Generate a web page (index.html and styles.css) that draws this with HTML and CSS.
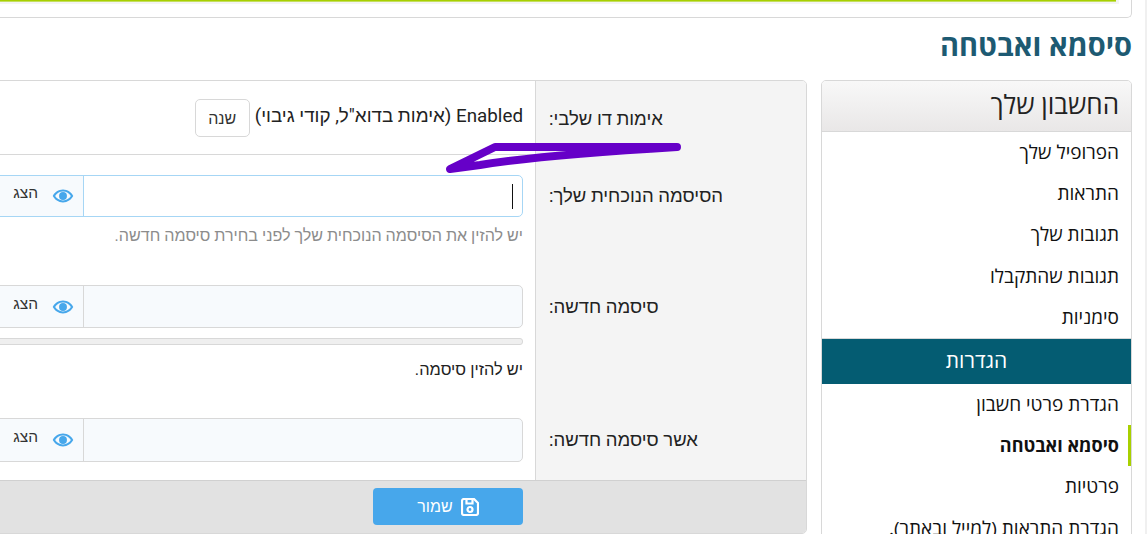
FILE: index.html
```html
<!DOCTYPE html>
<html lang="he" dir="rtl">
	<head>
		<meta charset="utf-8">
		<title>סיסמא ואבטחה</title>
		<link rel="stylesheet" href="styles.css">
	</head>
	<body>
		<div class="page">
			<div class="topcard"><div class="topline"></div></div>
			<h1 class="title">סיסמא ואבטחה</h1>

			<div class="columns">
				<div class="side">
					<div class="side-head">החשבון שלך</div>
					<a class="side-item">הפרופיל שלך</a>
					<a class="side-item">התראות</a>
					<a class="side-item">תגובות שלך</a>
					<a class="side-item">תגובות שהתקבלו</a>
					<a class="side-item">סימניות</a>
					<div class="side-section">הגדרות</div>
					<a class="side-item">הגדרת פרטי חשבון</a>
					<a class="side-item active">סיסמא ואבטחה</a>
					<a class="side-item">פרטיות</a>
					<a class="side-item">הגדרת התראות (למייל ובאתר).</a>
				</div>

				<form class="main">
					<div class="rows">
						<div class="row row-two">
							<div class="label">אימות דו שלבי:</div>
							<div class="field two-step">
								<span>Enabled (אימות בדוא"ל, קודי גיבוי)</span>
								<button type="button" class="btn-small">שנה</button>
							</div>
						</div>

						<div class="row row-current">
							<div class="label">הסיסמה הנוכחית שלך:</div>
							<div class="field">
								<div class="input-group focus">
									<div class="input"><span class="caret"></span></div>
									<div class="addon">
										<svg class="eye" viewBox="0 0 24 16"><path d="M12 1C7 1 3 4 .8 8 3 12 7 15 12 15s9-3 11.200-7C21 4 17 1 12 1zm0 2.200c4 0 6.800 2.300 8.600 4.800-1.800 2.500-4.600 4.800-8.600 4.800S5.200 10.500 3.400 8C5.200 5.500 8 3.200 12 3.200z"/><circle cx="12" cy="8" r="4.300"/></svg>
										<span>הצג</span>
									</div>
								</div>
								<div class="hint">יש להזין את הסיסמה הנוכחית שלך לפני בחירת סיסמה חדשה.</div>
							</div>
						</div>

						<div class="row row-new">
							<div class="label">סיסמה חדשה:</div>
							<div class="field">
								<div class="input-group">
									<div class="input"></div>
									<div class="addon">
										<svg class="eye" viewBox="0 0 24 16"><path d="M12 1C7 1 3 4 .8 8 3 12 7 15 12 15s9-3 11.200-7C21 4 17 1 12 1zm0 2.200c4 0 6.800 2.300 8.600 4.800-1.800 2.500-4.600 4.800-8.600 4.800S5.200 10.500 3.400 8C5.200 5.500 8 3.200 12 3.200z"/><circle cx="12" cy="8" r="4.300"/></svg>
										<span>הצג</span>
									</div>
								</div>
								<div class="meter"></div>
								<div class="hint hint-dark">יש להזין סיסמה.</div>
							</div>
						</div>

						<div class="row row-confirm">
							<div class="label">אשר סיסמה חדשה:</div>
							<div class="field">
								<div class="input-group">
									<div class="input"></div>
									<div class="addon">
										<svg class="eye" viewBox="0 0 24 16"><path d="M12 1C7 1 3 4 .8 8 3 12 7 15 12 15s9-3 11.200-7C21 4 17 1 12 1zm0 2.200c4 0 6.800 2.300 8.600 4.800-1.800 2.500-4.600 4.800-8.600 4.800S5.200 10.500 3.400 8C5.200 5.500 8 3.200 12 3.200z"/><circle cx="12" cy="8" r="4.300"/></svg>
										<span>הצג</span>
									</div>
								</div>
							</div>
						</div>
					</div>

					<div class="footer">
						<button type="button" class="btn-save">
							<svg class="save-icon" viewBox="0 0 18 18"><path d="M3 1h10l4 4v10a2 2 0 0 1-2 2H3a2 2 0 0 1-2-2V3a2 2 0 0 1 2-2z"/><path d="M5.500 1.500v4h6v-4"/><circle cx="9" cy="11.500" r="2.500"/></svg>
							<span>שמור</span>
						</button>
					</div>
				</form>
			</div>
		</div>

		<svg class="scribble" viewBox="0 0 1147 534"><path d="M450 169 L495 147 C560 147 620 147 677 147 C610 151 530 157 480 165 Z"/></svg>
	</body>
</html>
```

FILE: styles.css
```css
* {margin: 0; padding: 0; box-sizing: border-box;}

html, body {
	height: 534px;
	overflow: hidden;
	background: #fff;
}

body {
	font-family: Roboto, "Noto Sans", "Liberation Sans", sans-serif;
	font-size: 17px;
	color: #222;
	border-right: 2px solid #f0f0f0;
}

.page {
	margin-left: -60px;
	padding-right: 13px;
}

.topcard {
	height: 18px;
	border: 1px solid #d8d8d8;
	border-top: 0;
	border-radius: 0 0 5px 5px;
	padding-right: 12px;
}

.topline {
	height: 4px;
	background: linear-gradient(#a8d000 1px, #c4de60 1px) no-repeat left top / calc(100% - 3px) 2px, #f4f4f4;
}

.title {
	font-family: "Open Sans", sans-serif;
	font-size: 29px;
	font-weight: 700;
	line-height: 38px;
	color: #1d5a72;
	margin-top: 8px;
	margin-bottom: 16px;
}

.columns {
	display: flex;
	gap: 14px;
	align-items: flex-start;
}

/* side menu */
.side {
	flex: 0 0 311px;
	height: 480px;
	border: 1px solid #d8d8d8;
	border-radius: 5px 5px 0 0;
	font-family: "Open Sans", sans-serif;
	overflow: hidden;
}

.side-head {
	height: 51px;
	line-height: 46px;
	padding: 0 12px;
	font-size: 26px;
	color: #222;
	background: linear-gradient(#f8f8f8, #e9e7e7);
	border-bottom: 1px solid #d8d8d8;
}

.side-item {
	display: block;
	height: 41.200px;
	line-height: 40px;
	padding: 0 12px;
	font-size: 19px;
	color: #111;
	white-space: nowrap;
}

.side-item.active {
	font-weight: 700;
	font-size: 18px;
	border-right: 3px solid #a8d000;
	padding-right: 9px;
}

.side-section {
	height: 46px;
	line-height: 43px;
	text-align: center;
	font-size: 21px;
	color: #fff;
	background: #045c72;
	border-top: 1px solid #d8d8d8;
}

/* form */
.main {
	flex: 1;
	height: 454px;
	border: 1px solid #d8d8d8;
	border-radius: 5px;
	overflow: hidden;
}

.row {
	display: flex;
}

.label {
	flex: 0 0 271px;
	padding: 0 13px;
	background: #f4f4f4;
	border-left: 1px solid #d8d8d8;
	font-size: 18.500px;
	color: #222;
	text-align: left;
}

.field {
	flex: 1;
	padding: 0 12px;
	min-width: 0;
}

.row-two {
	height: 74px;
}

.row-two .label {
	padding-top: 27px;
}

.two-step {
	display: flex;
	gap: 5px;
	padding-top: 20px;
	border-bottom: 1px solid #d8d8d8;
	font-size: 18.800px;
}

.two-step span {
	line-height: 30px;
}

.btn-small {
	width: 55px;
	height: 38px;
	margin-top: -2px;
	background: #fff;
	border: 1px solid #d8d8d8;
	border-radius: 5px;
	font: 16px Roboto, "Noto Sans", sans-serif;
	color: #333;
}

.row-current {
	height: 130px;
}

.row-current .field {
	padding-top: 20px;
}

.row-current .label {
	padding-top: 30px;
}

.row-new {
	height: 133px;
}

.row-new .label {
	padding-top: 11px;
}

.row-new .input-group {
	height: 43px;
}

.row-confirm {
	height: 62px;
}

.row-confirm .label {
	padding-top: 11px;
}

.input-group {
	display: flex;
	height: 44px;
	background: #f7fafd;
	border: 1px solid #d8d8d8;
	border-radius: 5px;
}

.input-group.focus {
	height: 42px;
	background: #fff;
	border-color: #a6d6f5;
}

.input {
	flex: 1;
	padding: 8px 9px 0 0;
}

.caret {
	display: block;
	width: 1px;
	height: 25px;
	background: #111;
}

.addon {
	display: flex;
	align-items: center;
	gap: 14px;
	flex: 0 0 130px;
	padding-right: 9px;
	background: #f7fafd;
	border-right: 1px solid #d8d8d8;
	font-size: 15.500px;
	color: #333;
}

.addon span {
	margin-bottom: 6px;
}

.focus .addon {
	border-right-color: #a6d6f5;
}

.eye {
	width: 22px;
	height: 16px;
	fill: #47a7eb;
}

.hint {
	margin-top: 9px;
	font-size: 16.100px;
	line-height: 20px;
	color: #8c8c8c;
}

.hint-dark {
	margin-top: 15px;
	font-size: 16.400px;
	color: #222;
}

.meter {
	height: 7px;
	margin-top: 10px;
	background: #efefef;
	border: 1px solid #d8d8d8;
	border-radius: 3px;
}

.footer {
	height: 54px;
	padding: 7px 283px 0 0;
	background: #e2e2e2;
	border-top: 1px solid #d0d0d0;
}

.btn-save {
	display: flex;
	align-items: center;
	justify-content: center;
	gap: 8px;
	width: 150px;
	height: 37px;
	background: #47a7eb;
	border: 0;
	border-radius: 4px;
	color: #fff;
	font: 16px Roboto, "Noto Sans", sans-serif;
}

.save-icon {
	width: 18px;
	height: 18px;
	fill: none;
	stroke: #fff;
	stroke-width: 2.200;
}

.scribble {
	position: absolute;
	top: 0;
	left: 0;
	width: 1147px;
	height: 534px;
	pointer-events: none;
}

.scribble path {
	fill: none;
	stroke: #6600c8;
	stroke-width: 8;
	stroke-linejoin: round;
	stroke-linecap: round;
}
```
